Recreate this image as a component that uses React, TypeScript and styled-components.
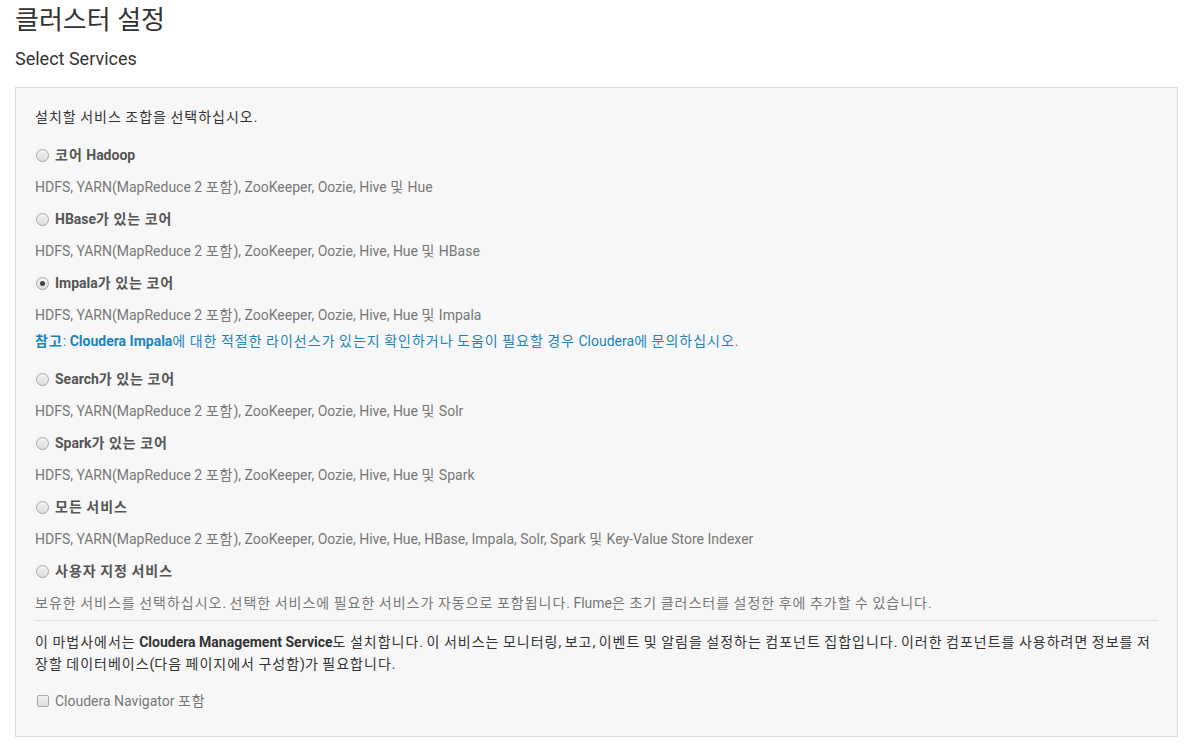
import React from "react";
import styled, { createGlobalStyle } from "styled-components";

const Global = createGlobalStyle`
  html, body { margin: 0; padding: 0; background: #fff; }
  body { font-family: Roboto, "Noto Sans CJK KR", sans-serif; color: #333; }
`;

const Page = styled.div`
  padding: 0 7px 0 15px;
`;

const Title = styled.h1`
  margin: 0;
  padding-top: 4px;
  font-size: 26px;
  font-weight: 400;
  line-height: 32px;
  color: #333;
`;

const Subtitle = styled.h2`
  margin: 11px 0 0;
  font-size: 18px;
  font-weight: 400;
  line-height: 24px;
  color: #333;
`;

const Panel = styled.div`
  margin-top: 16px;
  background: #f7f7f7;
  border: 1px solid #dcdcdc;
  padding: 19px 19px 25px 19px;
  font-size: 14px;
`;

/* Hangul runs are set slightly wider, as in the reference font */
const Ko = styled.span`
  letter-spacing: 1px;
`;

const Intro = styled.p`
  margin: 0 0 18px;
  line-height: 20px;
  color: #333;
`;

const OptionRow = styled.label`
  display: flex;
  align-items: center;
  gap: 6px;
  line-height: 20px;
  font-weight: 700;
  color: #555;
  margin-bottom: 12px;
`;

const Radio = styled.span<{ $checked?: boolean }>`
  position: relative;
  width: 11px;
  height: 11px;
  margin-left: 1px;
  border-radius: 50%;
  border: 1px solid #a9a9a9;
  background: linear-gradient(#f4f4f4, #dcdcdc);
  flex: none;
  &::after {
    content: "";
    display: ${(p) => (p.$checked ? "block" : "none")};
    position: absolute;
    left: 3px;
    top: 3px;
    width: 5px;
    height: 5px;
    border-radius: 50%;
    background: #444;
  }
`;

const Desc = styled.p<{ $mb: number }>`
  margin: 0 0 ${(p) => p.$mb}px;
  line-height: 20px;
  color: #777;
`;

const Note = styled.p`
  margin: 0 0 18px;
  line-height: 20px;
  color: #1d84bd;
  b { font-weight: 700; }
`;

const Rule = styled.hr`
  border: 0;
  border-top: 1px solid #ddd;
  margin: 0 0 10px;
`;

const Para = styled.p`
  margin: 0 0 16px;
  line-height: 22px;
  color: #333;
  b { font-weight: 700; }
`;

const CheckRow = styled.label`
  display: flex;
  align-items: center;
  gap: 6px;
  line-height: 20px;
  color: #777;
`;

const Check = styled.span`
  width: 10px;
  height: 10px;
  margin-left: 2px;
  border: 1px solid #a9a9a9;
  border-radius: 2px;
  background: linear-gradient(#f4f4f4, #dedede);
  flex: none;
`;

function k(text: string): React.ReactNode {
  const parts = text.split(/([\u1100-\u11FF\u3130-\u318F\uAC00-\uD7AF]+)/);
  return parts.map((p, i) =>
    i % 2 === 1 ? <Ko key={i}>{p}</Ko> : <React.Fragment key={i}>{p}</React.Fragment>
  );
}

const options = [
  { label: "코어 Hadoop", desc: "HDFS, YARN(MapReduce 2 포함), ZooKeeper, Oozie, Hive 및 Hue" },
  { label: "HBase가 있는 코어", desc: "HDFS, YARN(MapReduce 2 포함), ZooKeeper, Oozie, Hive, Hue 및 HBase" },
  { label: "Impala가 있는 코어", desc: "HDFS, YARN(MapReduce 2 포함), ZooKeeper, Oozie, Hive, Hue 및 Impala", checked: true, note: true },
  { label: "Search가 있는 코어", desc: "HDFS, YARN(MapReduce 2 포함), ZooKeeper, Oozie, Hive, Hue 및 Solr" },
  { label: "Spark가 있는 코어", desc: "HDFS, YARN(MapReduce 2 포함), ZooKeeper, Oozie, Hive, Hue 및 Spark" },
  { label: "모든 서비스", desc: "HDFS, YARN(MapReduce 2 포함), ZooKeeper, Oozie, Hive, Hue, HBase, Impala, Solr, Spark 및 Key-Value Store Indexer" },
  { label: "사용자 지정 서비스", desc: "보유한 서비스를 선택하십시오. 선택한 서비스에 필요한 서비스가 자동으로 포함됩니다. Flume은 초기 클러스터를 설정한 후에 추가할 수 있습니다." },
];

export default function App() {
  return (
    <Page>
      <Global />
      <Title>클러스터 설정</Title>
      <Subtitle>Select Services</Subtitle>
      <Panel>
        <Intro>{k("설치할 서비스 조합을 선택하십시오.")}</Intro>
        {options.map((o, i) => (
          <React.Fragment key={i}>
            <OptionRow>
              <Radio $checked={o.checked} />
              <span>{k(o.label)}</span>
            </OptionRow>
            <Desc $mb={o.note ? 6 : i === options.length - 1 ? 7 : 12}>{k(o.desc)}</Desc>
            {o.note && (
              <Note>
                <b>{k("참고")}</b>: <b>Cloudera Impala</b>
                {k("에 대한 적절한 라이선스가 있는지 확인하거나 도움이 필요할 경우 Cloudera에 문의하십시오.")}
              </Note>
            )}
          </React.Fragment>
        ))}
        <Rule />
        <Para>
          {k("이 마법사에서는 ")}
          <b>Cloudera Management Service</b>
          {k("도 설치합니다. 이 서비스는 모니터링, 보고, 이벤트 및 알림을 설정하는 컴포넌트 집합입니다. 이러한 컴포넌트를 사용하려면 정보를 저장할 데이터베이스(다음 페이지에서 구성함)가 필요합니다.")}
        </Para>
        <CheckRow>
          <Check />
          <span>{k("Cloudera Navigator 포함")}</span>
        </CheckRow>
      </Panel>
    </Page>
  );
}
